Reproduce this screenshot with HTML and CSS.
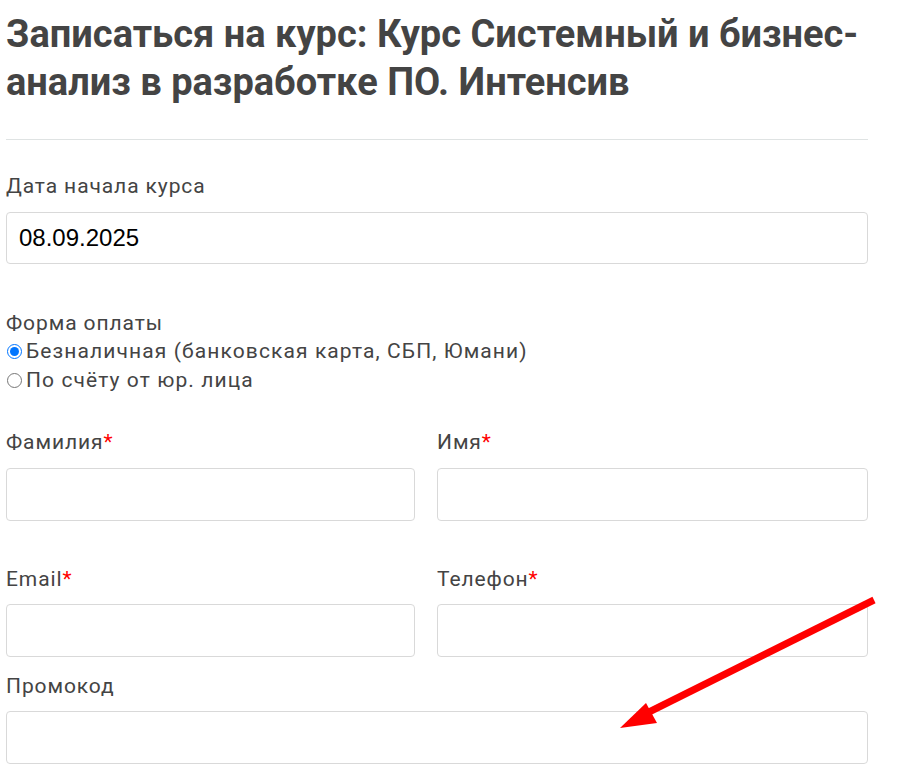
FILE: index.html
```html
<!DOCTYPE html>
<html lang="ru">
<head>
<meta charset="utf-8">
<title>Записаться на курс</title>
<link rel="stylesheet" href="styles.css">
</head>
<body>
<div class="page">
  <h1 class="title">Записаться на курс: Курс Системный и бизнес-анализ в разработке ПО. Интенсив</h1>
  <hr class="divider">
  <form class="form">
    <div class="field field-date">
      <label class="label">Дата начала курса</label>
      <input class="input input-date" type="text" value="08.09.2025">
    </div>
    <div class="field field-pay">
      <div class="label">Форма оплаты</div>
      <label class="radio-row"><input class="radio" type="radio" name="pay" checked>Безналичная (банковская карта, СБП, Юмани)</label>
      <label class="radio-row"><input class="radio" type="radio" name="pay">По счёту от юр. лица</label>
    </div>
    <div class="grid grid-name">
      <div class="field">
        <label class="label">Фамилия<span class="req">*</span></label>
        <input class="input" type="text">
      </div>
      <div class="field">
        <label class="label">Имя<span class="req">*</span></label>
        <input class="input" type="text">
      </div>
    </div>
    <div class="grid grid-contact">
      <div class="field">
        <label class="label">Email<span class="req">*</span></label>
        <input class="input" type="text">
      </div>
      <div class="field">
        <label class="label">Телефон<span class="req">*</span></label>
        <input class="input" type="text">
      </div>
    </div>
    <div class="field field-promo">
      <label class="label">Промокод</label>
      <input class="input" type="text">
    </div>
  </form>
  <svg class="arrow" width="907" height="773" viewBox="0 0 907 773" aria-hidden="true">
    <line x1="874" y1="600" x2="645" y2="714" stroke="#ff0000" stroke-width="7"/>
    <polygon points="620,728 646,703 657,723" fill="#ff0000"/>
  </svg>
</div>
</body>
</html>
```
FILE: styles.css
```css
html, body {
  margin: 0;
  padding: 0;
  background: #ffffff;
}
body {
  overflow: hidden;
}
.page {
  position: relative;
  width: 862px;
  padding: 0 0 0 6px;
  font-family: Roboto, "Noto Sans", sans-serif;
  color: #444444;
}
.title {
  margin: 0;
  padding-top: 10px;
  font-size: 38px;
  line-height: 48px;
  font-weight: 700;
  color: #444444;
  letter-spacing: 0;
}
.divider {
  margin: 33px 0 0 0;
  border: 0;
  border-top: 1px solid #dfe3e3;
  height: 0;
}
.form {
  display: flex;
  flex-direction: column;
}
.field {
  display: flex;
  flex-direction: column;
}
.label {
  font-size: 21px;
  line-height: 24px;
  color: #444444;
  letter-spacing: 0.9px;
  margin-bottom: 14px;
}
.req {
  color: #ff0000;
}
.input {
  box-sizing: border-box;
  width: 100%;
  height: 53px;
  margin: 0;
  border: 1px solid #d9d9d9;
  border-radius: 4px;
  background: #ffffff;
  padding: 0 12px;
  font-family: "Liberation Sans", Arial, sans-serif;
  font-size: 24px;
  color: #000000;
  outline: none;
}
.field-date {
  margin-top: 34px;
}
.input-date {
  height: 52px;
}
.field-pay {
  margin-top: 47px;
}
.field-pay .label {
  margin-bottom: 2px;
}
.radio-row {
  display: flex;
  align-items: center;
  gap: 2px;
  font-size: 21px;
  line-height: 29px;
  letter-spacing: 1.1px;
  color: #444444;
}
.radio {
  width: 15px;
  height: 15px;
  margin: 0 2px 0 1px;
}
.grid {
  display: grid;
  grid-template-columns: 409px 431px;
  column-gap: 22px;
}
.grid-name {
  margin-top: 35px;
}
.grid-contact {
  margin-top: 46px;
}
.grid-contact .label {
  margin-bottom: 13px;
}
.field-promo {
  margin-top: 17px;
}
.field-promo .label {
  margin-bottom: 13px;
}
.arrow {
  position: absolute;
  left: 0;
  top: 0;
  pointer-events: none;
}
```
